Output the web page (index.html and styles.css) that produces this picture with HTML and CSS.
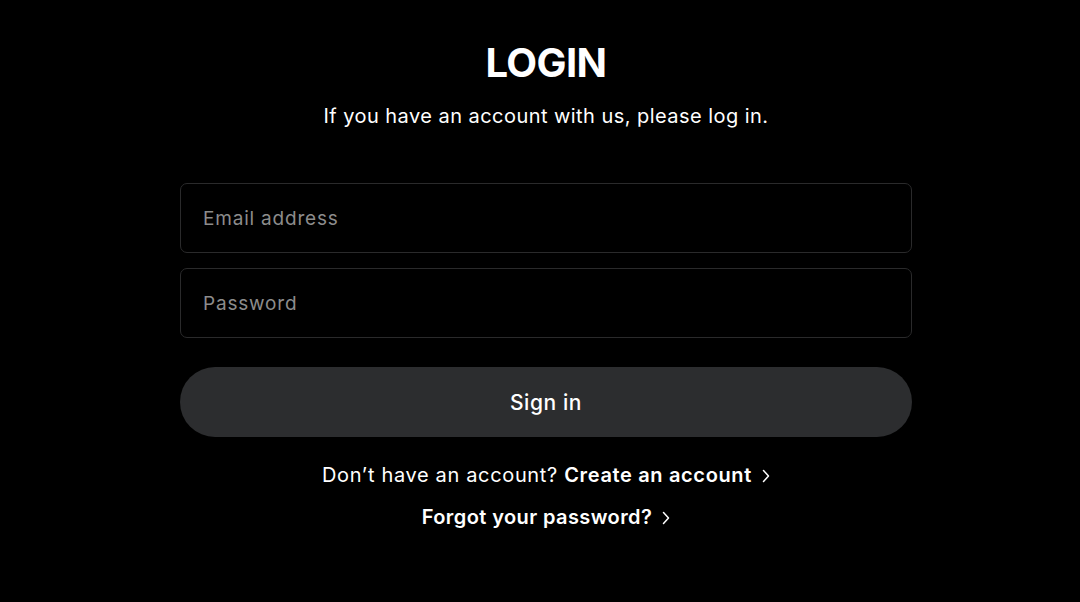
FILE: index.html
```html
<!DOCTYPE html>
<html lang="en">
<head>
<meta charset="utf-8">
<title>Login</title>
<link rel="stylesheet" href="styles.css">
</head>
<body>
<main class="login">
  <h1 class="title">LOGIN</h1>
  <p class="subtitle">If you have an account with us, please log in.</p>
  <form class="form">
    <input class="field" type="email" placeholder="Email address">
    <input class="field" type="password" placeholder="Password">
    <button class="submit" type="button">Sign in</button>
  </form>
  <p class="link-line first">Don’t have an account? <a class="link" href="#">Create an account<svg class="chev" viewBox="0 0 8 14" width="8" height="14"><polyline points="1.5,1.5 6.5,7 1.5,12.5" fill="none" stroke="#fff" stroke-width="1.5" stroke-linecap="round" stroke-linejoin="round"/></svg></a></p>
  <p class="link-line second"><a class="link" href="#">Forgot your password?<svg class="chev" viewBox="0 0 8 14" width="8" height="14"><polyline points="1.5,1.5 6.5,7 1.5,12.5" fill="none" stroke="#fff" stroke-width="1.5" stroke-linecap="round" stroke-linejoin="round"/></svg></a></p>
</main>
</body>
</html>
```
FILE: styles.css
```css
html, body {
  margin: 0;
  padding: 0;
  background: #000;
  color: #fff;
  font-family: "Inter", "Open Sans", sans-serif;
}
.login {
  width: 732px;
  margin-left: 180px;
  padding-top: 40px;
  display: flex;
  flex-direction: column;
  align-items: center;
}
.title {
  margin: 0;
  font-size: 40px;
  font-weight: 700;
  line-height: 46px;
  letter-spacing: -0.6px;
}
.subtitle {
  margin: 16px 0 0;
  font-size: 20px;
  line-height: 28px;
  font-weight: 400;
  letter-spacing: 0.45px;
}
.form {
  width: 100%;
  margin-top: 53px;
  display: flex;
  flex-direction: column;
  gap: 15px;
}
.field {
  box-sizing: border-box;
  width: 100%;
  height: 70px;
  padding: 0 22px;
  background: #000;
  border: 1px solid #2a2a2b;
  border-radius: 7px;
  color: #fff;
  font-family: inherit;
  font-size: 19px;
  letter-spacing: 0.8px;
  outline: none;
}
.field::placeholder {
  color: #8c8c8c;
}
.submit {
  margin-top: 14px;
  height: 70px;
  border: none;
  border-radius: 35px;
  background: #2c2d2f;
  color: #fff;
  font-family: inherit;
  font-size: 21px;
  font-weight: 500;
  letter-spacing: 0.6px;
  cursor: pointer;
}
.link-line {
  margin: 0;
  font-size: 20px;
  line-height: 28px;
  letter-spacing: 0.4px;
}
.link-line.first {
  margin-top: 24px;
  letter-spacing: 0.65px;
}
.link-line.second {
  margin-top: 14px;
}
.link {
  color: #fff;
  text-decoration: none;
  font-weight: 600;
}
.chev {
  margin-left: 10px;
  vertical-align: -1px;
}
```
